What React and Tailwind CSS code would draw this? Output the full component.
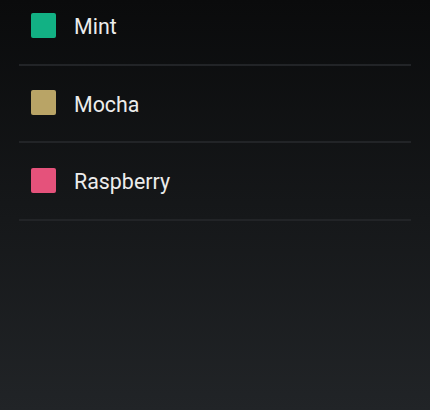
export default function App() {
  const items = [
    { name: "Mint", color: "bg-[#12b184]" },
    { name: "Mocha", color: "bg-[#b9a466]" },
    { name: "Raspberry", color: "bg-[#e5527b]" },
  ];
  return (
    <div
      className="w-[430px] h-[410px] overflow-hidden bg-gradient-to-b from-[#0a0b0c] to-[#212427]"
      style={{ fontFamily: "Roboto, 'Noto Sans', sans-serif" }}
    >
      <div className="-mt-[12px] px-[19px]">
        {items.map((it) => (
          <div key={it.name} className="flex flex-col">
            <div className="h-[75.5px] flex items-center pl-[12px]">
              <div className={`w-[25px] h-[25px] mb-[1px] rounded-[2px] ${it.color}`} />
              <span className="ml-[18px] text-[21.4px] text-[#ececec] leading-none pt-[2px]">{it.name}</span>
            </div>
            <div className="h-[2px] bg-[#222427]" />
          </div>
        ))}
      </div>
    </div>
  );
}
